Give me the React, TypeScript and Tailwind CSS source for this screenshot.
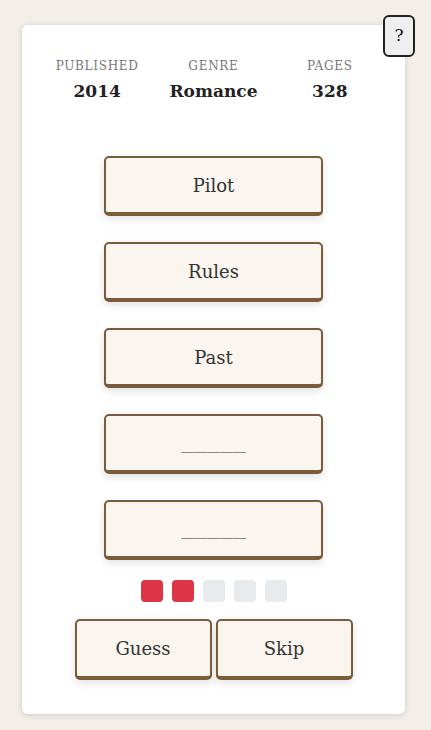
import React from "react";

const serif = "font-['DejaVu_Serif',Georgia,serif]";

const clues = ["Pilot", "Rules", "Past", "_____", "_____"];
const attempts = [true, true, false, false, false];

const ClueButton: React.FC<{ label: string }> = ({ label }) => (
  <button className="w-[219px] h-[60px] rounded-[5px] border-2 border-b-4 border-[#7a5c3a] bg-[#faf5ef] text-[18px] text-[#333] shadow-[0_3px_8px_rgba(0,0,0,0.12)]">
    {label.startsWith("_") ? <span className="inline-block scale-x-[1.45] -translate-y-[2px]">{label}</span> : label}
  </button>
);

export default function App() {
  return (
    <div className={`min-h-[730px] bg-[#f3efe8] px-[22px] pt-[25px] pb-4 ${serif}`}>
      <div className="relative bg-white rounded-[6px] shadow-[0_1px_6px_rgba(0,0,0,0.15)] h-[689px] w-[383px] pt-[32px]">
        <button className="absolute -top-[10px] -right-[10px] w-[32px] h-[42px] rounded-[6px] border-2 border-[#222] bg-[#efefef] text-[17px] text-[#111]">
          ?
        </button>

        <div className="grid grid-cols-3 px-[17px]">
          {[
            ["PUBLISHED", "2014"],
            ["GENRE", "Romance"],
            ["PAGES", "328"],
          ].map(([k, v]) => (
            <div key={k} className="flex flex-col items-center">
              <div className="text-[12px] tracking-[0.06em] text-[#777]">{k}</div>
              <div className="text-[17px] font-bold text-[#222] leading-[26px] mt-[3px]">{v}</div>
            </div>
          ))}
        </div>

        <div className="flex flex-col items-center gap-[26px] mt-[52px]">
          {clues.map((c, i) => (
            <ClueButton key={i} label={c} />
          ))}
        </div>

        <div className="flex justify-center gap-[9px] mt-[20px]">
          {attempts.map((used, i) => (
            <div
              key={i}
              className={`w-[22px] h-[22px] rounded-[4px] ${used ? "bg-[#dc3545]" : "bg-[#e8ebee]"}`}
            />
          ))}
        </div>

        <div className="flex justify-center gap-[4px] mt-[17px]">
          {["Guess", "Skip"].map((b) => (
            <button
              key={b}
              className="w-[137px] h-[61px] rounded-[5px] border-2 border-b-4 border-[#7a5c3a] bg-[#faf5ef] text-[18px] text-[#333] shadow-[0_3px_8px_rgba(0,0,0,0.12)]"
            >
              {b}
            </button>
          ))}
        </div>
      </div>
    </div>
  );
}
